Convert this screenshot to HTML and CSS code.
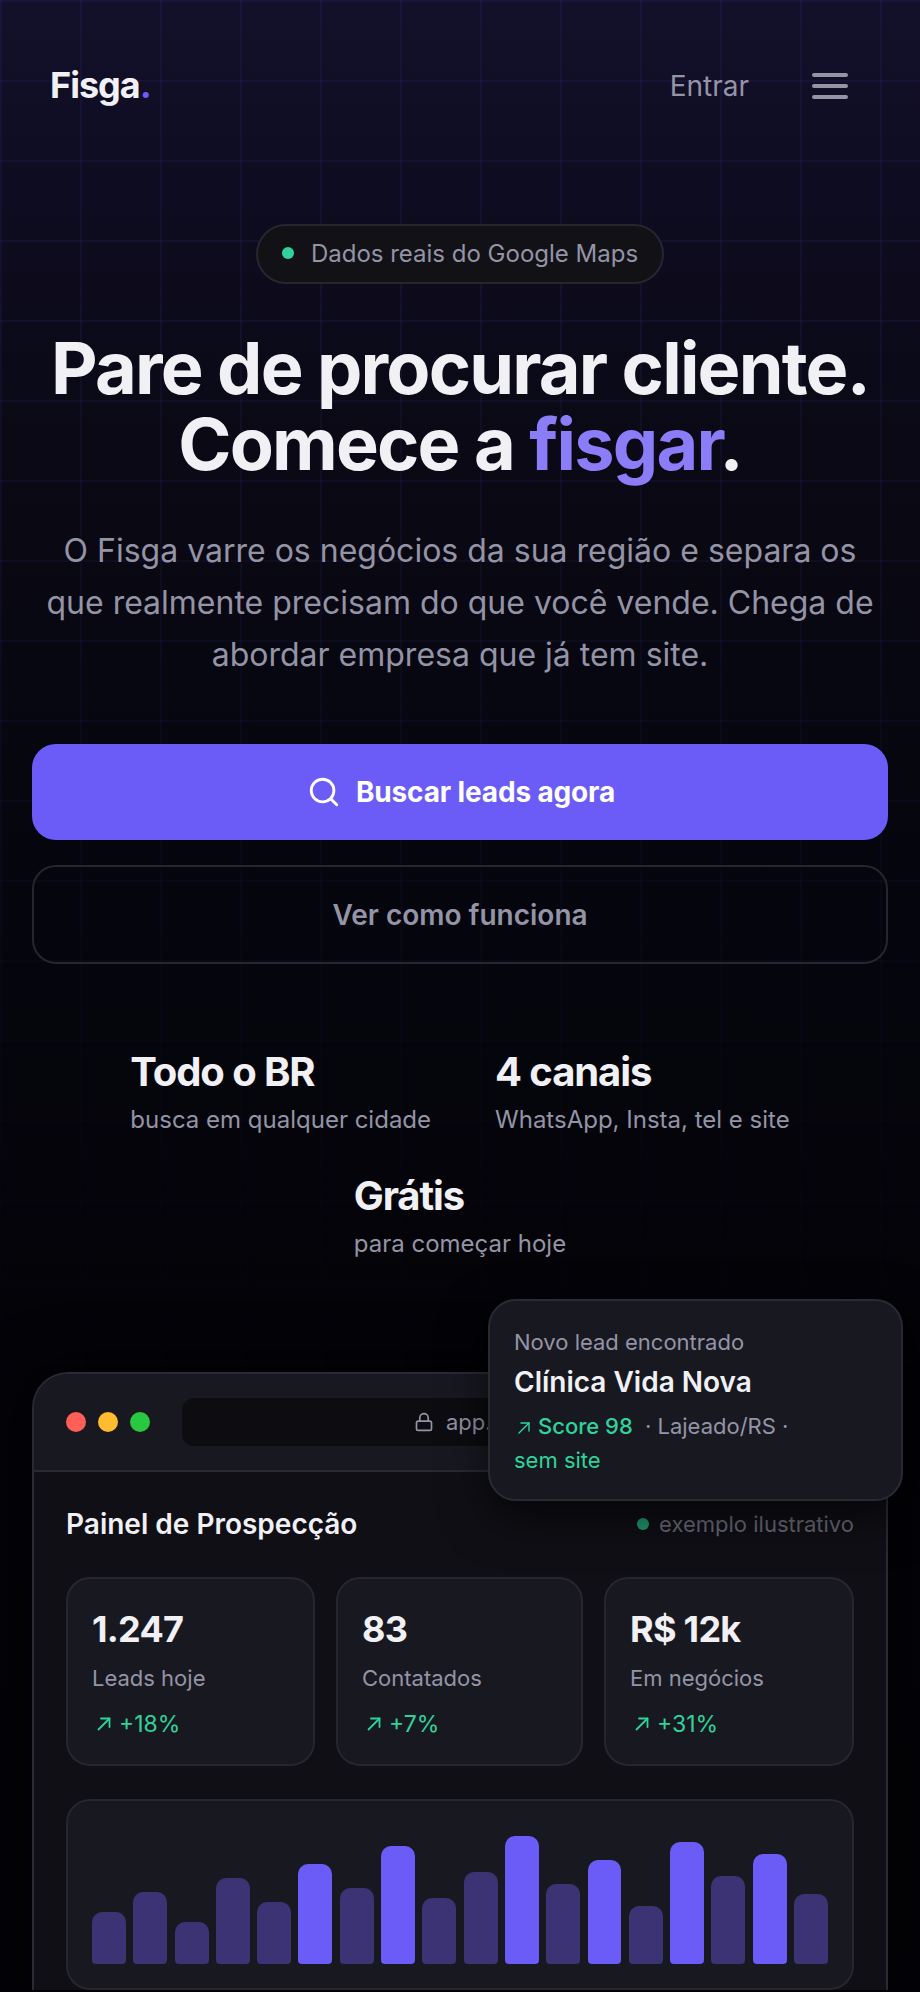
FILE: index.html
```html
<!DOCTYPE html>
<html lang="pt-BR">
<head>
    <meta charset="UTF-8">
    <meta name="viewport" content="width=device-width, initial-scale=1.0">
    <title>Fisga</title>
    <link rel="stylesheet" href="styles.css">
</head>
<body>
    <div class="grid-bg"></div>
    <div class="page">
        <nav class="nav">
            <div class="logo">Fisga<span class="logo-dot">.</span></div>
            <div class="nav-right">
                <a class="nav-link">Entrar</a>
                <div class="burger"><span></span><span></span><span></span></div>
            </div>
        </nav>

        <section class="hero">
            <div class="badge"><span class="badge-dot"></span>Dados reais do Google Maps</div>
            <h1>Pare de procurar cliente.<br>Comece a <span class="accent">fisgar</span>.</h1>
            <p class="lead">O Fisga varre os negócios da sua região e separa os que realmente precisam do que você vende. Chega de abordar empresa que já tem site.</p>
            <a class="btn btn-primary">
                <svg width="34" height="34" viewBox="0 0 24 24" fill="none" stroke="currentColor" stroke-width="2" stroke-linecap="round" stroke-linejoin="round"><circle cx="11" cy="11" r="8"></circle><path d="m21 21-4.3-4.3"></path></svg>
                Buscar leads agora
            </a>
            <a class="btn btn-ghost">Ver como funciona</a>

            <div class="facts">
                <div class="fact"><strong>Todo o BR</strong><span>busca em qualquer cidade</span></div>
                <div class="fact"><strong>4 canais</strong><span>WhatsApp, Insta, tel e site</span></div>
                <div class="fact"><strong>Grátis</strong><span>para começar hoje</span></div>
            </div>
        </section>

        <section class="mock-wrap">
            <div class="toast">
                <div class="toast-top">Novo lead encontrado</div>
                <div class="toast-name">Clínica Vida Nova</div>
                <div class="toast-meta">
                    <span class="green score"><svg class="arrow" width="14" height="14" viewBox="0 0 14 14" fill="none" stroke="currentColor" stroke-width="1.4" stroke-linecap="round" stroke-linejoin="round"><path d="M4 2h8v8"></path><path d="M2 12 12 2"></path></svg>Score 98</span>
                    <span class="toast-city">· Lajeado/RS ·</span><br>
                    <span class="green">sem site</span>
                </div>
            </div>

            <div class="mock">
                <div class="mock-bar">
                    <span class="light red"></span>
                    <span class="light yellow"></span>
                    <span class="light lime"></span>
                    <div class="url">
                        <svg width="20" height="20" viewBox="0 0 24 24" fill="none" stroke="currentColor" stroke-width="2" stroke-linecap="round" stroke-linejoin="round"><rect x="3" y="11" width="18" height="11" rx="2"></rect><path d="M7 11V7a5 5 0 0 1 10 0v4"></path></svg>
                        app.fisga.com.br
                    </div>
                </div>
                <div class="mock-body">
                    <div class="panel-head">
                        <h2>Painel de Prospecção</h2>
                        <div class="panel-note"><span class="note-dot"></span>exemplo ilustrativo</div>
                    </div>
                    <div class="kpis">
                        <div class="kpi">
                            <div class="kpi-value">1.247</div>
                            <div class="kpi-label">Leads hoje</div>
                            <div class="kpi-up"><svg width="14" height="14" viewBox="0 0 14 14" fill="none" stroke="currentColor" stroke-width="1.8" stroke-linecap="round" stroke-linejoin="round"><path d="M4 1.5h8.5V10"></path><path d="M1.5 12.5l11-11"></path></svg>+18%</div>
                        </div>
                        <div class="kpi">
                            <div class="kpi-value">83</div>
                            <div class="kpi-label">Contatados</div>
                            <div class="kpi-up"><svg width="14" height="14" viewBox="0 0 14 14" fill="none" stroke="currentColor" stroke-width="1.8" stroke-linecap="round" stroke-linejoin="round"><path d="M4 1.5h8.5V10"></path><path d="M1.5 12.5l11-11"></path></svg>+7%</div>
                        </div>
                        <div class="kpi">
                            <div class="kpi-value">R$ 12k</div>
                            <div class="kpi-label">Em negócios</div>
                            <div class="kpi-up"><svg width="14" height="14" viewBox="0 0 14 14" fill="none" stroke="currentColor" stroke-width="1.8" stroke-linecap="round" stroke-linejoin="round"><path d="M4 1.5h8.5V10"></path><path d="M1.5 12.5l11-11"></path></svg>+31%</div>
                        </div>
                    </div>
                    <div class="chart">
                        <div class="bar" style="height:52px"></div>
                        <div class="bar" style="height:72px"></div>
                        <div class="bar" style="height:42px"></div>
                        <div class="bar" style="height:86px"></div>
                        <div class="bar" style="height:62px"></div>
                        <div class="bar on" style="height:100px"></div>
                        <div class="bar" style="height:76px"></div>
                        <div class="bar on" style="height:118px"></div>
                        <div class="bar" style="height:66px"></div>
                        <div class="bar" style="height:92px"></div>
                        <div class="bar on" style="height:128px"></div>
                        <div class="bar" style="height:80px"></div>
                        <div class="bar on" style="height:104px"></div>
                        <div class="bar" style="height:58px"></div>
                        <div class="bar on" style="height:122px"></div>
                        <div class="bar" style="height:88px"></div>
                        <div class="bar on" style="height:110px"></div>
                        <div class="bar" style="height:70px"></div>
                    </div>
                </div>
            </div>
        </section>
    </div>
</body>
</html>
```

FILE: styles.css
```css
* {
    box-sizing: border-box;
}
html, body {
    margin: 0;
    padding: 0;
}
body {
    position: relative;
    height: 1992px;
    overflow: hidden;
    font-family: "Inter", "Liberation Sans", sans-serif;
    color: #f0f0f5;
    background-color: #030307;
    background-image: linear-gradient(#13102b 0%, #0e0c20 10%, #0a0915 22%, #06060f 40%, #030308 65%, #030307 100%);
}
.grid-bg {
    position: absolute;
    inset: 0 0 auto 0;
    height: 1400px;
    background-image:
        linear-gradient(rgba(108, 92, 247, 0.07) 2px, transparent 2px),
        linear-gradient(90deg, rgba(108, 92, 247, 0.07) 2px, transparent 2px);
    background-size: 80px 80px;
    -webkit-mask-image: linear-gradient(#000 0%, #000 25%, rgba(0, 0, 0, 0.15) 100%);
    mask-image: linear-gradient(#000 0%, #000 25%, rgba(0, 0, 0, 0.15) 100%);
}
.page {
    position: relative;
    padding: 0 32px;
}

/* nav */
.nav {
    display: flex;
    justify-content: space-between;
    align-items: center;
    height: 172px;
    padding: 0 40px 0 18px;
}
.logo {
    margin-top: -2px;
    font-size: 36px;
    font-weight: 700;
    letter-spacing: -1px;
}
.logo-dot {
    color: #6c5cf7;
}
.nav-right {
    display: flex;
    align-items: center;
    gap: 63px;
}
.nav-link {
    font-size: 28px;
    color: #9494a6;
}
.burger {
    display: flex;
    flex-direction: column;
    gap: 7px;
    width: 36px;
}
.burger span {
    height: 4px;
    border-radius: 2px;
    background-color: #9494a6;
}

/* hero */
.hero {
    display: flex;
    flex-direction: column;
    align-items: center;
    text-align: center;
}
.badge {
    display: flex;
    align-items: center;
    gap: 17px;
    margin-top: 52px;
    height: 60px;
    padding: 0 24px 2px;
    border: 2px solid #26262f;
    border-radius: 30px;
    background-color: #111116;
    color: #9494a6;
    font-size: 24px;
}
.badge-dot {
    width: 12px;
    height: 12px;
    border-radius: 50%;
    background-color: #2fd39a;
}
h1 {
    margin: 46px 0 0;
    font-size: 72px;
    line-height: 76px;
    font-weight: 750;
    letter-spacing: -1.8px;
    color: #f0f0f5;
    white-space: nowrap;
}
.accent {
    color: #8b7cf8;
}
.lead {
    margin: 43px 0 0;
    font-size: 32px;
    line-height: 52px;
    color: #9494a6;
    width: 856px;
}
.btn {
    display: flex;
    align-items: center;
    justify-content: center;
    gap: 15px;
    width: 100%;
    border-radius: 24px;
    font-size: 28px;
    font-weight: 700;
}
.btn-primary {
    height: 96px;
    margin-top: 63px;
    padding-left: 2px;
    letter-spacing: -0.15px;
    background-color: #6c5cf7;
    color: #fff;
}
.btn-ghost {
    height: 99px;
    margin-top: 25px;
    border: 2px solid #26262f;
    color: #9494a6;
    font-weight: 600;
}
.facts {
    display: flex;
    flex-wrap: wrap;
    justify-content: center;
    gap: 34px 64px;
    margin-top: 84px;
    text-align: left;
}
.fact strong {
    display: block;
    font-size: 40px;
    line-height: 48px;
    font-weight: 700;
    letter-spacing: -1.1px;
}
.fact span {
    display: block;
    margin-top: 6px;
    font-size: 24px;
    line-height: 36px;
    color: #9494a6;
}

/* mock window */
.mock-wrap {
    position: relative;
    margin-top: 38px;
    padding-top: 72px;
}
.toast {
    position: absolute;
    top: -1px;
    right: -15px;
    width: 415px;
    height: 202px;
    padding: 24px;
    border: 2px solid #2a2a35;
    border-radius: 28px;
    background-color: #181821;
    box-shadow: 0 16px 48px rgba(0, 0, 0, 0.6);
    z-index: 2;
}
.toast-top {
    font-size: 22px;
    line-height: 34px;
    color: #9494a6;
}
.toast-name {
    margin-top: 3px;
    font-size: 28px;
    line-height: 40px;
    font-weight: 600;
}
.toast-meta {
    margin-top: 7px;
    font-size: 22px;
    line-height: 34px;
    color: #9494a6;
}
.green {
    color: #2fd39a;
}
.score {
    font-weight: 500;
}
.toast-meta .arrow {
    margin: 0 7px 0 3px;
    vertical-align: -1px;
}
.toast-city {
    margin-left: 6px;
}
.mock {
    width: 856px;
    border: 2px solid #2a2a35;
    border-bottom: 0;
    border-radius: 36px 36px 0 0;
    background-color: #0f0f15;
    box-shadow: 0 0 60px rgba(0, 0, 0, 0.6);
    overflow: hidden;
}
.mock-bar {
    display: flex;
    align-items: center;
    gap: 12px;
    height: 98px;
    padding: 0 32px;
    border-bottom: 2px solid #2a2a35;
    background-color: #181821;
}
.light {
    width: 20px;
    height: 20px;
    border-radius: 50%;
}
.red {
    background-color: #ff5f57;
}
.yellow {
    background-color: #febc2e;
}
.lime {
    background-color: #28c840;
}
.url {
    flex: 1;
    display: flex;
    align-items: center;
    justify-content: center;
    gap: 12px;
    height: 48px;
    margin-left: 20px;
    border-radius: 12px;
    background-color: #0c0c11;
    color: #9494a6;
    font-size: 22px;
}
.mock-body {
    padding: 27px 32px 0;
}
.panel-head {
    display: flex;
    justify-content: space-between;
    align-items: center;
    height: 50px;
}
h2 {
    margin: 0;
    font-size: 28px;
    font-weight: 600;
    color: #f0f0f5;
}
.panel-note {
    display: flex;
    align-items: center;
    gap: 10px;
    font-size: 22px;
    color: #6a6a78;
}
.note-dot {
    width: 12px;
    height: 12px;
    border-radius: 50%;
    background-color: #1f9a70;
}
.kpis {
    display: grid;
    grid-template-columns: 249px 247px 250px;
    gap: 21px;
    margin-top: 28px;
}
.kpi {
    height: 189px;
    padding: 26px 24px;
    border: 2px solid #26262f;
    border-radius: 24px;
    background-color: #181821;
}
.kpi-value {
    font-size: 36px;
    line-height: 48px;
    font-weight: 700;
    letter-spacing: -0.72px;
}
.kpi-label {
    margin-top: 8px;
    font-size: 22px;
    line-height: 34px;
    color: #9494a6;
}
.kpi-up {
    display: flex;
    align-items: center;
    gap: 8px;
    margin-top: 12px;
    padding-left: 5px;
    font-size: 23px;
    line-height: 34px;
    color: #2fd39a;
}
.chart {
    display: flex;
    align-items: flex-end;
    gap: 7.4px;
    height: 191px;
    margin-top: 33px;
    padding: 24px;
    border: 2px solid #26262f;
    border-radius: 24px;
    background-color: #181821;
}
.bar {
    flex: 1;
    border-radius: 10px 10px 4px 4px;
    background-color: #3b3373;
}
.bar.on {
    background-color: #6c5cf7;
}
```
